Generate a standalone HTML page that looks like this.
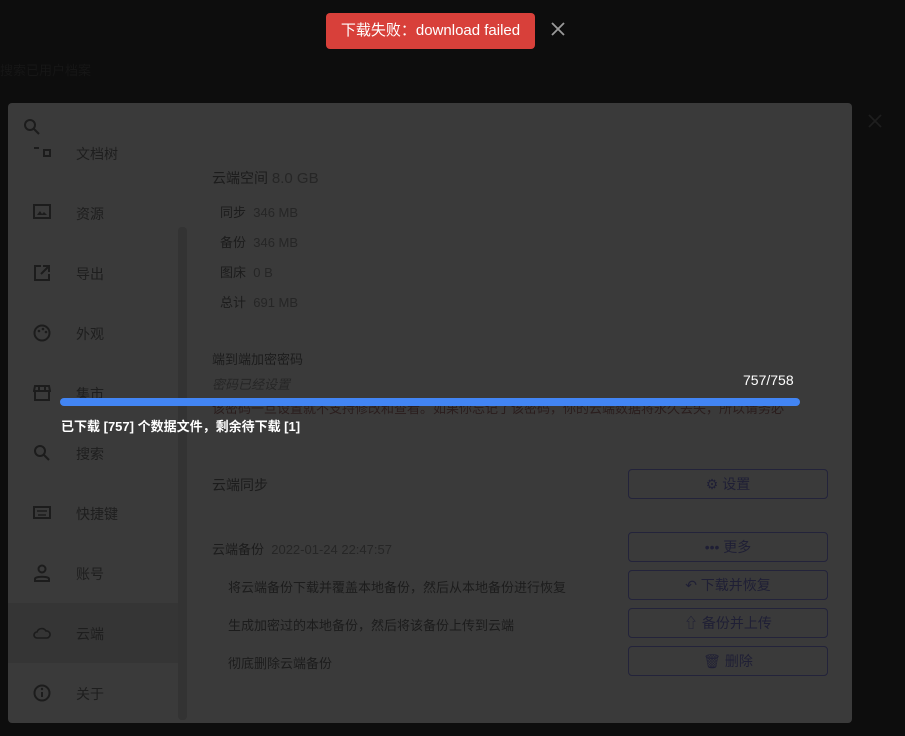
<!DOCTYPE html>
<html><head><meta charset="utf-8"><style>
*{margin:0;padding:0;box-sizing:border-box}
body{width:905px;height:736px;background:#0d0d0d;font-family:"Liberation Sans","Noto Sans CJK SC",sans-serif;position:relative;overflow:hidden;color:#1c1c1c}
.a{position:absolute;white-space:nowrap}
.dlg{position:absolute;left:8px;top:103px;width:844px;height:620px;background:#3a3a3a;border-radius:4px}
.nav{font-size:14px;color:#1e1e1e}
.btn{position:absolute;left:628px;width:200px;height:30px;border:1px solid #23233a;border-radius:4px;font-size:14px;color:#1f1f35;text-align:center;line-height:28px}
.t{font-size:14px;color:#1c1c1c}
.g{color:#262626}
</style></head><body>
<div class="a" style="left:0;top:60px;font-size:13px;color:#161616">搜索已用户档案</div>
<div class="dlg"></div>
<div class="a" style="left:8px;top:603px;width:170px;height:60px;background:#353535"></div>
<div class="a" style="left:178px;top:227px;width:9px;height:493px;background:#333;border-radius:4px"></div>
<svg class="a" style="left:23px;top:118px" width="18" height="18" viewBox="0 0 18 18"><circle cx="7" cy="7" r="5" fill="none" stroke="#1c1c1c" stroke-width="2"/><path d="M11 11l5 5" stroke="#1c1c1c" stroke-width="2"/></svg>
<svg class="a" style="left:33px;top:146px" width="18" height="14"><path d="M1 2h5M11 4h6v6h-6z" fill="none" stroke="#1c1c1c" stroke-width="2"/></svg>
<div class="a nav" style="left:76px;top:144px">文档树</div>
<div class="a nav" style="left:76px;top:204px">资源</div>
<div class="a nav" style="left:76px;top:264px">导出</div>
<div class="a nav" style="left:76px;top:324px">外观</div>
<div class="a nav" style="left:76px;top:384px">集市</div>
<div class="a nav" style="left:76px;top:444px">搜索</div>
<div class="a nav" style="left:76px;top:504px">快捷键</div>
<div class="a nav" style="left:76px;top:564px">账号</div>
<div class="a nav" style="left:76px;top:624px">云端</div>
<div class="a nav" style="left:76px;top:684px">关于</div>
<svg class="a" style="left:33px;top:204px" width="18" height="16"><rect x="1" y="1" width="16" height="13" fill="none" stroke="#1c1c1c" stroke-width="2"/><path d="M4 11l3-4 2 3 2-2 3 3z" fill="#1c1c1c"/></svg>
<svg class="a" style="left:33px;top:264px" width="18" height="18"><path d="M8 2H2v14h14v-6M10 2h6v6M16 2L8 10" fill="none" stroke="#1c1c1c" stroke-width="2"/></svg>
<svg class="a" style="left:33px;top:324px" width="18" height="18"><circle cx="9" cy="9" r="7.5" fill="none" stroke="#1c1c1c" stroke-width="2"/><circle cx="6" cy="7" r="1.3" fill="#1c1c1c"/><circle cx="10" cy="5" r="1.3" fill="#1c1c1c"/><circle cx="13" cy="8" r="1.3" fill="#1c1c1c"/></svg>
<svg class="a" style="left:33px;top:385px" width="18" height="16"><path d="M2 1h14l1 5H1zM2 6v9h14V6M6 1v5M12 1v5" fill="none" stroke="#1c1c1c" stroke-width="2"/></svg>
<svg class="a" style="left:33px;top:444px" width="18" height="18"><circle cx="7" cy="7" r="5" fill="none" stroke="#1c1c1c" stroke-width="2"/><path d="M11 11l5 5" stroke="#1c1c1c" stroke-width="2"/></svg>
<svg class="a" style="left:33px;top:506px" width="18" height="14"><rect x="1" y="1" width="16" height="11" fill="none" stroke="#1c1c1c" stroke-width="2"/><path d="M4 5h10M5 9h8" stroke="#1c1c1c" stroke-width="1.5"/></svg>
<svg class="a" style="left:33px;top:564px" width="18" height="18"><circle cx="9" cy="5" r="3.5" fill="none" stroke="#1c1c1c" stroke-width="2"/><path d="M2 17v-2c0-3 14-3 14 0v2z" fill="none" stroke="#1c1c1c" stroke-width="2"/></svg>
<svg class="a" style="left:33px;top:626px" width="18" height="14"><path d="M4 12a3 3 0 010-6a5 5 0 019-1a3.5 3.5 0 011 7z" fill="none" stroke="#1c1c1c" stroke-width="1.6"/></svg>
<svg class="a" style="left:33px;top:684px" width="18" height="18"><circle cx="9" cy="9" r="7.5" fill="none" stroke="#1c1c1c" stroke-width="2"/><path d="M9 8v5" stroke="#1c1c1c" stroke-width="2"/><circle cx="9" cy="5" r="1.2" fill="#1c1c1c"/></svg>

<div class="a t" style="left:212px;top:168px;font-size:14px">云端空间 <span class="g" style="font-size:15px">8.0 GB</span></div>
<div class="a t" style="left:220px;top:202px;font-size:13px">同步 <span class="g" style="font-size:13px">&nbsp;346 MB</span></div>
<div class="a t" style="left:220px;top:232px;font-size:13px">备份 <span class="g" style="font-size:13px">&nbsp;346 MB</span></div>
<div class="a t" style="left:220px;top:262px;font-size:13px">图床 <span class="g" style="font-size:13px">&nbsp;0 B</span></div>
<div class="a t" style="left:220px;top:292px;font-size:13px">总计 <span class="g" style="font-size:13px">&nbsp;691 MB</span></div>
<div class="a t" style="left:212px;top:349px;font-size:13px">端到端加密密码</div>
<div class="a t g" style="left:212px;top:374px;font-size:13px;font-style:italic">密码已经设置</div>
<div class="a t" style="left:212px;top:398px;font-size:13px;color:#2a1d1d">该密码一旦设置就不支持修改和查看。如果你忘记了该密码，你的云端数据将永久丢失，所以请务必</div>
<div class="a t" style="left:212px;top:475px">云端同步</div>
<div class="a t" style="left:212px;top:539px;font-size:13px">云端备份 <span class="g" style="font-size:13px">&nbsp;2022-01-24 22:47:57</span></div>
<div class="a t" style="left:228px;top:577px;font-size:13px">将云端备份下载并覆盖本地备份，然后从本地备份进行恢复</div>
<div class="a t" style="left:228px;top:615px;font-size:13px">生成加密过的本地备份，然后将该备份上传到云端</div>
<div class="a t" style="left:228px;top:653px;font-size:13px">彻底删除云端备份</div>
<div class="btn" style="top:469px">⚙ 设置</div>
<div class="btn" style="top:532px">••• 更多</div>
<div class="btn" style="top:570px">↶ 下载并恢复</div>
<div class="btn" style="top:608px">⇧ 备份并上传</div>
<div class="btn" style="top:646px">🗑 删除</div>

<div class="a" style="left:60px;top:398px;width:740px;height:8px;background:#4285f4;border-radius:4px"></div>
<div class="a" style="left:743px;top:372px;font-size:14px;color:#fff">757/758</div>
<div class="a" style="left:61px;top:416px;font-size:13px;color:#fff;font-weight:bold">已下载 [757] 个数据文件，剩余待下载 [1]</div>

<div class="a" style="left:326px;top:13px;width:209px;height:36px;background:#d8403a;border-radius:4px;color:#fff;font-size:15px;line-height:36px;text-align:center">下载失败：download failed</div>
<svg class="a" style="left:550px;top:21px" width="16" height="16"><path d="M2 2l12 12M14 2L2 14" stroke="#9a9a9a" stroke-width="1.8"/></svg>
<svg class="a" style="left:867px;top:113px" width="16" height="16"><path d="M2 2l12 12M14 2L2 14" stroke="#1e1e1e" stroke-width="1.8"/></svg>
</body></html>
